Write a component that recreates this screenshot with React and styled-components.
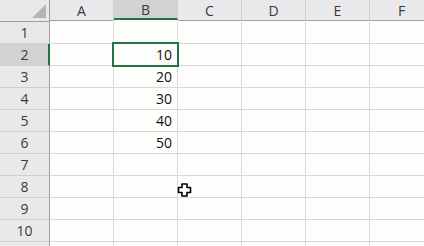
import React from "react";
import styled, { createGlobalStyle } from "styled-components";

const GlobalStyle = createGlobalStyle`
  html, body {
    margin: 0;
    padding: 0;
    background: #fdfdfc;
    overflow: hidden;
  }
  body {
    font-family: "Open Sans", "Liberation Sans", Arial, sans-serif;
  }
`;

const COLS = ["A", "B", "C", "D", "E", "F"];
const ROWS = [1, 2, 3, 4, 5, 6, 7, 8, 9, 10, ""];
const values = { 2: "10", 3: "20", 4: "30", 5: "40", 6: "50" };
const selCol = "B";
const selRow = 2;

const Sheet = styled.div`
  position: relative;
  display: grid;
  grid-template-columns: 50px repeat(6, 64px);
  grid-auto-rows: 22px;
  width: 424px;
  height: 246px;
  overflow: hidden;
  background: #fdfdfc;
`;

const Corner = styled.div`
  background: #e9e8ea;
  border-right: 1px solid #9f9f9f;
  border-bottom: 1px solid #9f9f9f;
  display: flex;
  align-items: flex-end;
  justify-content: flex-end;
  padding: 0 3px 3px 0;
  svg {
    display: block;
  }
`;

const ColHead = styled.div`
  background: ${(p) => (p.$active ? "#d3d2d3" : "#e9e8ea")};
  border-right: 1px solid #d0cfd0;
  border-bottom: ${(p) => (p.$active ? "2px solid #217346" : "1px solid #9f9f9f")};
  height: ${(p) => (p.$active ? "20px" : "21px")};
  display: flex;
  align-items: flex-end;
  justify-content: center;
  padding-bottom: ${(p) => (p.$active ? "1px" : "2px")};
  box-sizing: border-box;
  font-size: 14px;
  color: #3a3a3a;
  line-height: 1;
`;

const RowHead = styled.div`
  background: ${(p) => (p.$active ? "#d3d2d3" : "#e9e8ea")};
  border-right: ${(p) => (p.$active ? "2px solid #217346" : "1px solid #9f9f9f")};
  border-bottom: 1px solid #d0cfd0;
  display: flex;
  align-items: flex-end;
  justify-content: center;
  padding-bottom: 3px;
  padding-left: ${(p) => (p.$active ? "1px" : "0")};
  box-sizing: border-box;
  font-size: 14px;
  color: #3a3a3a;
  line-height: 1;
`;

const Cell = styled.div`
  position: relative;
  border-right: 1px solid #d9d8d9;
  border-bottom: 1px solid #d9d8d9;
  display: flex;
  align-items: flex-end;
  justify-content: flex-end;
  padding: 0 5px 3px 0;
  box-sizing: border-box;
  font-size: 14px;
  color: #111;
  line-height: 1;
  ${(p) =>
    p.$selected &&
    `
    &::after {
      content: "";
      position: absolute;
      left: -2px;
      top: -2px;
      right: -2px;
      bottom: -2px;
      border: 2px solid #217346;
      z-index: 2;
    }
  `}
`;

const Pointer = styled.svg`
  position: absolute;
  left: 177px;
  top: 183px;
  z-index: 3;
`;

function CornerTriangle() {
  return (
    <svg width="14" height="14" viewBox="0 0 14 14">
      <polygon points="14,0 14,14 0,14" fill="#b5b4b5" />
    </svg>
  );
}

function CrossCursor() {
  return (
    <Pointer width="15" height="14" viewBox="0 0 15 14">
      <path
        d="M5 1 H10 V4.5 H13.5 V9.5 H10 V13 H5 V9.5 H1.5 V4.5 H5 Z"
        fill="#fff"
        stroke="#000"
        strokeWidth="1.6"
        strokeLinejoin="round"
      />
    </Pointer>
  );
}

export default function App() {
  return (
    <>
      <GlobalStyle />
      <Sheet>
        <Corner>
          <CornerTriangle />
        </Corner>
        {COLS.map((c) => (
          <ColHead key={c} $active={c === selCol}>
            {c}
          </ColHead>
        ))}
        {ROWS.map((r, i) => (
          <React.Fragment key={i}>
            <RowHead $active={r === selRow}>{r}</RowHead>
            {COLS.map((c) => (
              <Cell key={c} $selected={c === selCol && r === selRow}>
                {c === "B" ? values[r] : null}
              </Cell>
            ))}
          </React.Fragment>
        ))}
        <CrossCursor />
      </Sheet>
    </>
  );
}
